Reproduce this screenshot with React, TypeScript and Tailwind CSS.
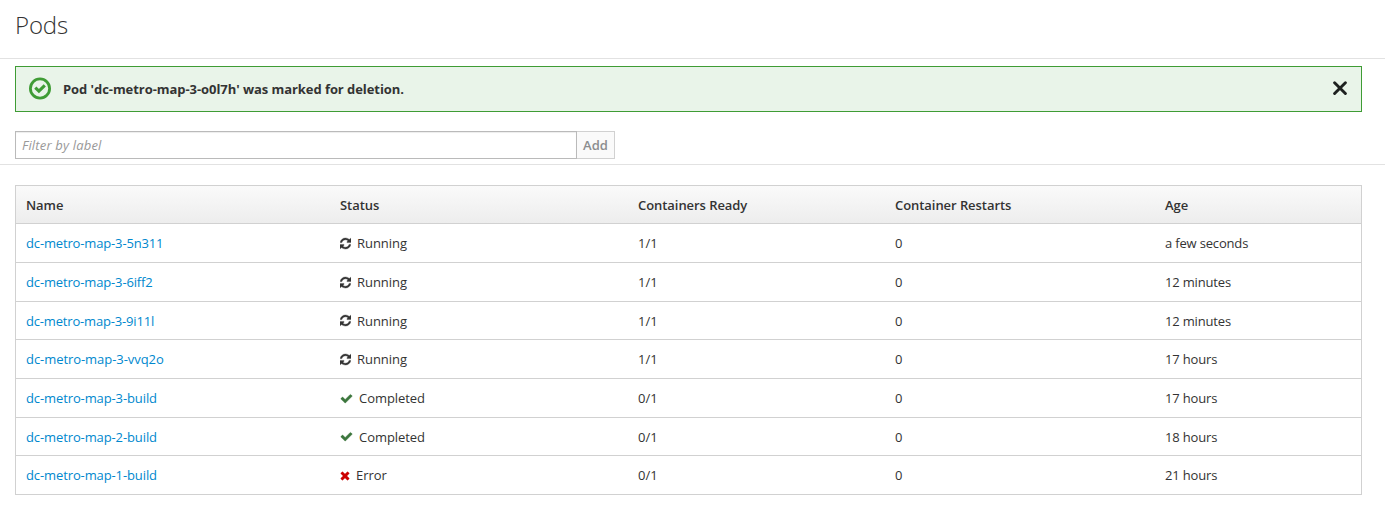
import React from "react";

type Status = "Running" | "Completed" | "Error";

interface Pod {
  name: string;
  status: Status;
  ready: string;
  restarts: number;
  age: string;
  height: string;
  nameTracking: string;
}

const pods: Pod[] = [
  { name: "dc-metro-map-3-5n311", status: "Running", ready: "1/1", restarts: 0, age: "a few seconds", height: "h-[39px]", nameTracking: "tracking-[-0.15px]" },
  { name: "dc-metro-map-3-6iff2", status: "Running", ready: "1/1", restarts: 0, age: "12 minutes", height: "h-[39px]", nameTracking: "tracking-[-0.15px]" },
  { name: "dc-metro-map-3-9i11l", status: "Running", ready: "1/1", restarts: 0, age: "12 minutes", height: "h-[38px]", nameTracking: "tracking-[-0.17px]" },
  { name: "dc-metro-map-3-vvq2o", status: "Running", ready: "1/1", restarts: 0, age: "17 hours", height: "h-[39px]", nameTracking: "tracking-[-0.06px]" },
  { name: "dc-metro-map-3-build", status: "Completed", ready: "0/1", restarts: 0, age: "17 hours", height: "h-[39px]", nameTracking: "tracking-[-0.11px]" },
  { name: "dc-metro-map-2-build", status: "Completed", ready: "0/1", restarts: 0, age: "18 hours", height: "h-[38px]", nameTracking: "tracking-[-0.11px]" },
  { name: "dc-metro-map-1-build", status: "Error", ready: "0/1", restarts: 0, age: "21 hours", height: "h-[39px]", nameTracking: "tracking-[-0.11px]" },
];

const columns = "grid grid-cols-[314px_298px_257px_270px_1fr] pl-[10px]";

function StatusIcon({ status }: { status: Status }) {
  if (status === "Running") {
    return (
      <svg viewBox="128 0 1536 1792" className="mr-[6px] h-[13px] w-[11px] shrink-0" fill="#333333" stroke="#333333" strokeWidth="50">
        <path d="M1639 1056q0 5-1 7-64 268-268 434.5t-478 166.5q-146 0-282.5-55t-243.5-157l-129 129q-19 19-45 19t-45-19-19-45v-448q0-26 19-45t45-19h448q26 0 45 19t19 45-19 45l-137 137q71 66 161 102t187 36q134 0 250-65t186-179q11-17 53-117 8-23 30-23h192q13 0 22.5 9.5t9.5 22.5zm25-800v448q0 26-19 45t-45 19h-448q-26 0-45-19t-19-45 19-45l138-138q-148-137-349-137-134 0-250 65t-186 179q-11 17-53 117-8 23-30 23h-199q-13 0-22.5-9.5t-9.5-22.5v-7q65-268 270-434.5t480-166.5q146 0 284 55.5t245 156.5l130-129q19-19 45-19t45 19 19 45z" />
      </svg>
    );
  }
  if (status === "Completed") {
    return (
      <svg viewBox="0 0 1792 1792" className="mr-[6px] h-[13px] w-[13px] shrink-0" fill="#3c763d" stroke="#3c763d" strokeWidth="40">
        <path d="M1671 566q0 40-28 68l-724 724-136 136q-28 28-68 28t-68-28l-136-136-362-362q-28-28-28-68t28-68l136-136q28-28 68-28t68 28l294 295 656-657q28-28 68-28t68 28l136 136q28 28 28 68z" />
      </svg>
    );
  }
  return (
    <svg viewBox="192 0 1408 1792" className="mr-[6px] h-[13px] w-[10px] shrink-0" fill="#cc0000" stroke="#cc0000" strokeWidth="40">
      <path d="M1490 1322q0 40-28 68l-136 136q-28 28-68 28t-68-28l-294-294-294 294q-28 28-68 28t-68-28l-136-136q-28-28-28-68t28-68l294-294-294-294q-28-28-28-68t28-68l136-136q28-28 68-28t68 28l294 294 294-294q28-28 68-28t68 28l136 136q28 28 28 68t-28 68l-294 294 294 294q28 28 28 68z" />
    </svg>
  );
}

export default function App() {
  return (
    <div className="min-h-[514px] w-full bg-white font-['Open_Sans',sans-serif] text-[13px] leading-5 text-[#333333]">
      <header className="h-[59px] border-b border-[#e2e2e2] pt-[12px] pl-[15px]">
        <h1 className="text-[24px] leading-[26px] font-light tracking-[-0.15px]">Pods</h1>
      </header>

      <section className="h-[106px] border-b border-[#e2e2e2] pt-[7px] pr-[23px] pl-[15px]">
        <div className="flex h-[46px] items-center border border-[#3f9c35] bg-[#e9f4e9] pr-[13px] pl-[13px]">
          <svg viewBox="0 0 22 23" className="-mt-px h-[23px] w-[22px]" fill="none" stroke="#3f9c35">
            <circle cx="11" cy="11.5" r="9.6" strokeWidth="2.8" />
            <path d="M6.3 10.7 9.9 14.2 15.8 8.4" strokeWidth="3.1" />
          </svg>
          <strong className="ml-[12px] flex-1 font-bold tracking-[-0.06px]">Pod 'dc-metro-map-3-o0l7h' was marked for deletion.</strong>
          <button aria-label="Close" className="-mt-[2px]">
            <svg viewBox="0 0 15 15" className="h-[15px] w-[15px]" stroke="#1e2120" strokeWidth="2.9" strokeLinecap="round">
              <path d="M1.6 1.7 12.4 12.5M12.4 1.7 1.6 12.5" />
            </svg>
          </button>
        </div>

        <div className="mt-[19px] flex h-[28px]">
          <input
            placeholder="Filter by label"
            className="w-[562px] border border-[#bababa] bg-white px-[6px] tracking-[0.18px] shadow-[inset_0_1px_1px_rgba(0,0,0,0.075)] outline-none placeholder:text-[#999999] placeholder:italic"
          />
          <button className="w-[38px] border border-l-0 border-[#d1d1d1] bg-[#fafafa] font-semibold text-[#8b8d8f]">Add</button>
        </div>
      </section>

      <main className="mt-[20px] mr-[23px] ml-[15px] border-x border-t border-[#d1d1d1]">
        <div className={`${columns} h-[38px] items-center border-b border-[#d1d1d1] bg-linear-to-b from-[#fafafa] to-[#ededed] font-semibold tracking-[-0.06px]`}>
          <span>Name</span>
          <span>Status</span>
          <span>Containers Ready</span>
          <span>Container Restarts</span>
          <span>Age</span>
        </div>
        {pods.map((pod) => (
          <div key={pod.name} className={`${columns} ${pod.height} items-center border-b border-[#d1d1d1]`}>
            <a href="#" className={`text-[#0088ce] ${pod.nameTracking}`}>{pod.name}</a>
            <span className="flex items-center tracking-[-0.05px]">
              <StatusIcon status={pod.status} />
              {pod.status}
            </span>
            <span>{pod.ready}</span>
            <span>{pod.restarts}</span>
            <span className="tracking-[-0.17px]">{pod.age}</span>
          </div>
        ))}
      </main>
    </div>
  );
}
